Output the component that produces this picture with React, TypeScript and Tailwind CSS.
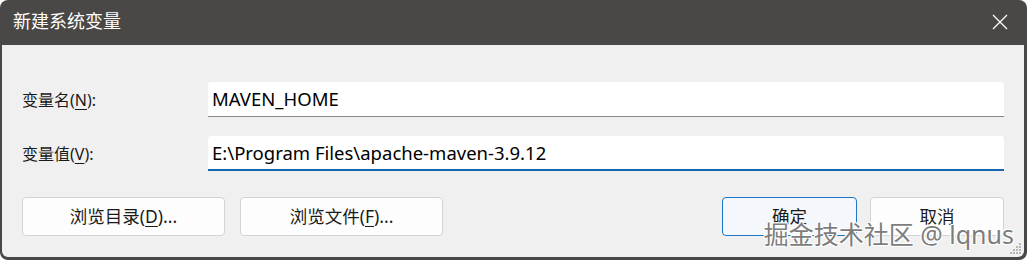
import React from 'react'

const font = { fontFamily: '"Noto Sans", "Noto Sans CJK SC", sans-serif' }

function Label({ text, hot }: { text: string; hot: string }) {
  return (
    <div className="w-[186px] shrink-0 text-[16px] text-[#1a1a1a]">
      {text}(<span className="underline underline-offset-[3px]">{hot}</span>):
    </div>
  )
}

function Btn({ children, w, primary }: { children: React.ReactNode; w: string; primary?: boolean }) {
  return (
    <div
      className={`${w} h-[39px] flex items-center justify-center rounded-[4px] border text-[17.5px] text-[#1a1a1a] ${
        primary ? 'border-[#1f75c6] bg-[#f4f7fb]' : 'border-[#d3d3d3] bg-[#fdfdfd]'
      }`}
    >
      {children}
    </div>
  )
}

export default function App() {
  return (
    <div className="w-[1027px] h-[260px] bg-white" style={font}>
      <div className="w-full h-full bg-[#4a4846] rounded-[8px] flex flex-col overflow-hidden">
        {/* 标题栏 */}
        <div className="h-[45px] shrink-0 flex items-center justify-between pl-[13px] pr-[19px]">
          <span className="text-white text-[18px] pb-[2px]">新建系统变量</span>
          <svg width="16" height="16" viewBox="0 0 16 16" className="mb-[1px]">
            <path d="M1 1 L15 15 M15 1 L1 15" stroke="#ffffff" strokeWidth="1.3" />
          </svg>
        </div>

        <div className="relative flex-1 ml-[2px] mr-[3px] mb-[3px] bg-[#f0f0f0] rounded-b-[6px] pl-[20px] pr-[20px] pt-[37px]">
          <div className="flex items-center">
            <Label text="变量名" hot="N" />
            <div className="flex-1 h-[35px] bg-white rounded-t-[3px] border-b border-[#888888] flex items-center pl-[4px] text-[18.5px] text-black">
              MAVEN_HOME
            </div>
          </div>
          <div className="flex items-center mt-[19px]">
            <Label text="变量值" hot="V" />
            <div className="flex-1 h-[35px] bg-white rounded-t-[3px] border-b-2 border-[#1466b0] flex items-center pl-[4px] text-[18.5px] text-black">
              E:\Program Files\apache-maven-3.9.12
            </div>
          </div>

          <div className="flex items-center mt-[26px]">
            <div className="flex gap-[15px]">
              <Btn w="w-[203px]">
                浏览目录(<span className="underline underline-offset-[3px]">D</span>)...
              </Btn>
              <Btn w="w-[203px]">
                浏览文件(<span className="underline underline-offset-[3px]">F</span>)...
              </Btn>
            </div>
            <div className="ml-auto flex gap-[13px]">
              <Btn w="w-[135px]" primary>
                确定
              </Btn>
              <Btn w="w-[134px]">取消</Btn>
            </div>
          </div>

          {/* 水印 */}
          <div
            className="absolute right-[10px] bottom-[10px] text-[25px] leading-none text-[#7d7d7d]"
            style={{ textShadow: '1px 1px 0 #ffffff, -1px -1px 0 #ffffff, 1px -1px 0 #ffffff, -1px 1px 0 #ffffff' }}
          >
            掘金技术社区 @ lqnus
          </div>

          {/* 尺寸调整 */}
          <svg width="12" height="12" viewBox="0 0 12 12" className="absolute right-[2px] bottom-[2px]">
            {[
              [9, 0], [6, 3], [9, 3], [3, 6], [6, 6], [9, 6], [0, 9], [3, 9], [6, 9], [9, 9],
            ].map(([x, y], i) => (
              <rect key={i} x={x} y={y} width="2" height="2" fill="#b5b5b5" />
            ))}
          </svg>
        </div>
      </div>
    </div>
  )
}
